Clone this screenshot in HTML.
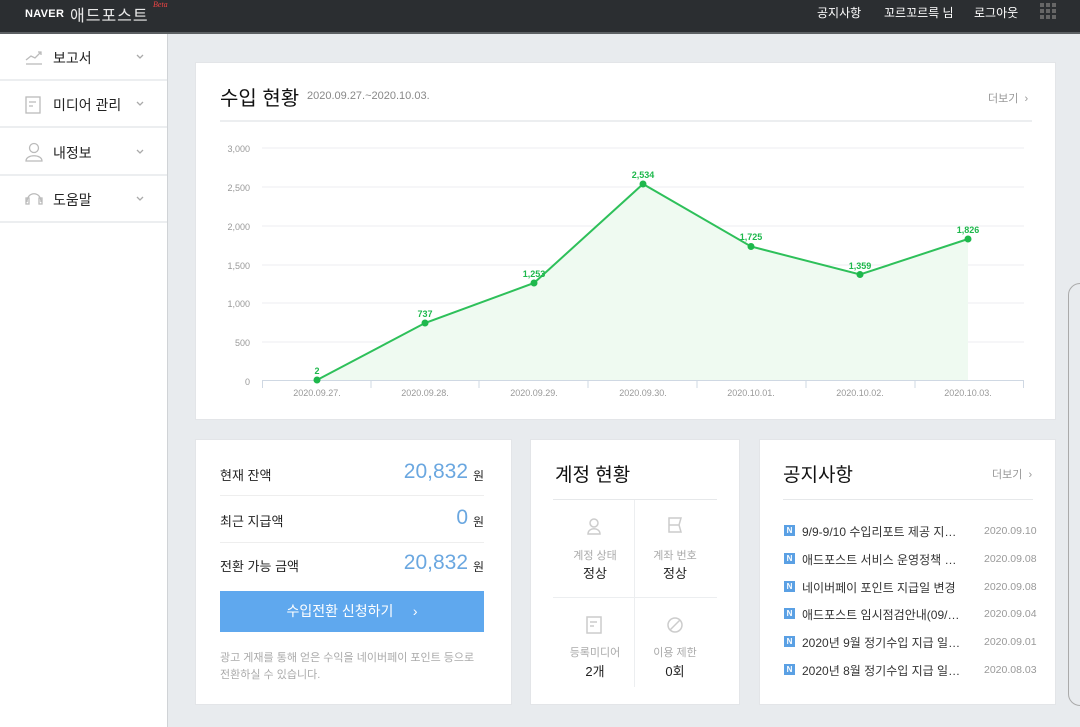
<!DOCTYPE html>
<html><head><meta charset="utf-8"><style>
*{margin:0;padding:0;box-sizing:border-box}
body{width:1080px;height:727px;overflow:hidden;background:#e8ebee;font-family:"Liberation Sans","Noto Sans CJK KR",sans-serif;position:relative;color:#222}
.a{position:absolute}
.hdr{left:0;top:0;width:1080px;height:34px;background:#2b2e31;border-bottom:2px solid #5c6063}
.side{left:0;top:34px;width:168px;height:693px;background:#fff;border-right:1px solid #d0d3d6}
.mi{position:absolute;left:0;width:167px;height:47px;border-bottom:2px solid #eceef0;font-size:14px;color:#222}
.mi span{position:absolute;left:53px;top:14px}
.mi svg{position:absolute;left:136px;top:20px}
.card{background:#fff;border:1px solid #e3e5e8}
.hd{color:#fff;font-size:12px;top:4px}
.gt{font-size:20px;color:#111}
.more{font-size:11px;color:#999}
.lbl{font-size:13px;color:#222}
.num{font-size:21px;color:#6aa7e0;text-align:right}
.won{font-size:12px;color:#222}
.nl{font-size:12px;color:#333}
.nd{font-size:10.5px;color:#999}
.nb{width:11px;height:11px;background:#5aa0e4;color:#fff;font-size:8px;font-weight:bold;text-align:center;line-height:11px}
</style></head><body>
<div class="a hdr"></div>
<div class="a" style="left:25px;top:8px;color:#fff;font-weight:900;font-size:11px;letter-spacing:0.3px">NAVER</div>
<div class="a" style="left:70px;top:2px;color:#e8e8e8;font-size:16px;letter-spacing:1px">애드포스트</div>
<div class="a" style="left:153px;top:0px;color:#e44;font-size:8px;font-style:italic;font-family:'Liberation Serif',serif">Beta</div>
<div class="a hd" style="left:817px">공지사항</div>
<div class="a hd" style="left:884px">꼬르꼬르륵 님</div>
<div class="a hd" style="left:974px">로그아웃</div>
<svg class="a" style="left:1040px;top:3px" width="17" height="17"><g fill="#666"><rect x="0" y="0" width="4" height="4"/><rect x="6" y="0" width="4" height="4"/><rect x="12" y="0" width="4" height="4"/><rect x="0" y="6" width="4" height="4"/><rect x="6" y="6" width="4" height="4"/><rect x="12" y="6" width="4" height="4"/><rect x="0" y="12" width="4" height="4"/><rect x="6" y="12" width="4" height="4"/><rect x="12" y="12" width="4" height="4"/></g></svg>

<div class="a side">
<div class="mi" style="top:0"><span>보고서</span><svg width="8" height="6"><path d="M1 1 L4 4 L7 1" fill="none" stroke="#aaa" stroke-width="1.3"/></svg></div>
<div class="mi" style="top:47px"><span>미디어 관리</span><svg width="8" height="6"><path d="M1 1 L4 4 L7 1" fill="none" stroke="#aaa" stroke-width="1.3"/></svg></div>
<div class="mi" style="top:95px"><span>내정보</span><svg width="8" height="6"><path d="M1 1 L4 4 L7 1" fill="none" stroke="#aaa" stroke-width="1.3"/></svg></div>
<div class="mi" style="top:142px"><span>도움말</span><svg width="8" height="6"><path d="M1 1 L4 4 L7 1" fill="none" stroke="#aaa" stroke-width="1.3"/></svg></div>
</div>
<svg class="a" style="left:24px;top:48px" width="20" height="170" fill="none" stroke="#bbb" stroke-width="1.3">
<path d="M2 12 L7 8 L11 10 L17 4 M14 4 L17 4 L17 7"/><path d="M2 16 H18"/>
<rect x="2" y="49" width="14" height="16"/><path d="M5 54 H12 M5 58 H9"/>
<circle cx="10" cy="100" r="4.5"/><path d="M2 113 C2 106 18 106 18 113 Z"/>
<path d="M3 154 C3 143 17 143 17 154"/><rect x="2" y="150" width="3" height="6"/><rect x="15" y="150" width="3" height="6"/>
</svg>

<div class="a" style="left:1068px;top:283px;width:20px;height:423px;border:1px solid #aaa;border-radius:12px 0 0 12px;background:#e8ebee"></div>

<div class="a card" style="left:195px;top:62px;width:861px;height:358px"></div>
<div class="a gt" style="left:220px;top:82px">수입 현황</div>
<div class="a" style="left:307px;top:90px;font-size:11px;color:#888">2020.09.27.~2020.10.03.</div>
<div class="a more" style="left:988px;top:90px">더보기 &nbsp;›</div>
<div class="a" style="left:220px;top:120px;width:812px;height:2px;background:#eceef0"></div>
<svg class="a" style="left:0;top:0" width="1080" height="727" font-family="Liberation Sans,sans-serif">
<g stroke="#f0f1f3" stroke-width="1.2">
<line x1="262" y1="148" x2="1024" y2="148"/><line x1="262" y1="187" x2="1024" y2="187"/><line x1="262" y1="226" x2="1024" y2="226"/><line x1="262" y1="265" x2="1024" y2="265"/><line x1="262" y1="303" x2="1024" y2="303"/><line x1="262" y1="342" x2="1024" y2="342"/>
</g>
<g font-size="9" fill="#999" text-anchor="end">
<text x="250" y="152">3,000</text><text x="250" y="191">2,500</text><text x="250" y="230">2,000</text><text x="250" y="269">1,500</text><text x="250" y="307">1,000</text><text x="250" y="346">500</text><text x="250" y="385">0</text>
</g>
<line x1="262" y1="380.5" x2="1024" y2="380.5" stroke="#cfd8e3"/>
<g stroke="#cfd8e3"><line x1="262.5" y1="380" x2="262.5" y2="388"/><line x1="371" y1="380" x2="371" y2="388"/><line x1="479" y1="380" x2="479" y2="388"/><line x1="588" y1="380" x2="588" y2="388"/><line x1="697" y1="380" x2="697" y2="388"/><line x1="806" y1="380" x2="806" y2="388"/><line x1="915" y1="380" x2="915" y2="388"/><line x1="1023.5" y1="380" x2="1023.5" y2="388"/></g>
<g font-size="9" fill="#999" text-anchor="middle">
<text x="317" y="396">2020.09.27.</text><text x="425" y="396">2020.09.28.</text><text x="534" y="396">2020.09.29.</text><text x="643" y="396">2020.09.30.</text><text x="751" y="396">2020.10.01.</text><text x="860" y="396">2020.10.02.</text><text x="968" y="396">2020.10.03.</text>
</g>
<path d="M317 380 L425 323 L534 283 L643 184 L751 246.5 L860 274.5 L968 239 L968 380 Z" fill="#effaf1"/>
<path d="M317 380 L425 323 L534 283 L643 184 L751 246.5 L860 274.5 L968 239" fill="none" stroke="#2ec05a" stroke-width="2"/>
<g fill="#1eb84c"><circle cx="317" cy="380" r="3.5"/><circle cx="425" cy="323" r="3.5"/><circle cx="534" cy="283" r="3.5"/><circle cx="643" cy="184" r="3.5"/><circle cx="751" cy="246.5" r="3.5"/><circle cx="860" cy="274.5" r="3.5"/><circle cx="968" cy="239" r="3.5"/></g>
<g font-size="9" font-weight="bold" fill="#1eb84c" text-anchor="middle">
<text x="317" y="374">2</text><text x="425" y="317">737</text><text x="534" y="277">1,253</text><text x="643" y="178">2,534</text><text x="751" y="240">1,725</text><text x="860" y="269">1,359</text><text x="968" y="233">1,826</text>
</g>
</svg>

<div class="a card" style="left:195px;top:439px;width:317px;height:266px"></div>
<div class="a lbl" style="left:220px;top:465px">현재 잔액</div>
<div class="a num" style="left:380px;top:460px;width:88px">20,832</div><div class="a won" style="left:473px;top:467px">원</div>
<div class="a" style="left:220px;top:495px;width:264px;height:1px;background:#eee"></div>
<div class="a lbl" style="left:220px;top:511px">최근 지급액</div>
<div class="a num" style="left:380px;top:506px;width:88px">0</div><div class="a won" style="left:473px;top:513px">원</div>
<div class="a" style="left:220px;top:542px;width:264px;height:1px;background:#eee"></div>
<div class="a lbl" style="left:220px;top:556px">전환 가능 금액</div>
<div class="a num" style="left:380px;top:551px;width:88px">20,832</div><div class="a won" style="left:473px;top:558px">원</div>
<div class="a" style="left:220px;top:591px;width:264px;height:41px;background:#5fa8ee;color:#fff;font-size:14px;text-align:center;line-height:40px">수입전환 신청하기 &nbsp;&nbsp;&nbsp; ›</div>
<div class="a" style="left:220px;top:650px;font-size:11px;color:#aaa;line-height:17px">광고 게재를 통해 얻은 수익을 네이버페이 포인트 등으로<br>전환하실 수 있습니다.</div>

<div class="a card" style="left:530px;top:439px;width:210px;height:266px"></div>
<div class="a gt" style="left:555px;top:460px;font-size:19px">계정 현황</div>
<div class="a" style="left:553px;top:499px;width:164px;height:1px;background:#e6e8ea"></div>
<div class="a" style="left:553px;top:597px;width:164px;height:1px;background:#eceef0"></div>
<div class="a" style="left:634px;top:500px;width:1px;height:187px;background:#eceef0"></div>
<svg class="a" style="left:583px;top:515px" width="110" height="120" fill="none" stroke="#ccc" stroke-width="1.5">
<circle cx="11" cy="8" r="4"/><path d="M5 19 C5 12 17 12 17 19 Z"/>
<path d="M86 3 H98 L96 10 L98 17 H86 Z M86 10 H96"/>
<rect x="4" y="102" width="14" height="16"/><path d="M7 107 H14 M7 111 H11"/>
<circle cx="92" cy="110" r="7"/><path d="M87 115 L97 105"/>
</svg>
<div class="a" style="left:555px;top:547px;width:80px;text-align:center;font-size:11px;color:#aaa">계정 상태</div>
<div class="a" style="left:555px;top:563px;width:80px;text-align:center;font-size:13px;color:#222">정상</div>
<div class="a" style="left:635px;top:547px;width:80px;text-align:center;font-size:11px;color:#aaa">계좌 번호</div>
<div class="a" style="left:635px;top:563px;width:80px;text-align:center;font-size:13px;color:#222">정상</div>
<div class="a" style="left:555px;top:644px;width:80px;text-align:center;font-size:11px;color:#aaa">등록미디어</div>
<div class="a" style="left:555px;top:661px;width:80px;text-align:center;font-size:13px;color:#222">2개</div>
<div class="a" style="left:635px;top:644px;width:80px;text-align:center;font-size:11px;color:#aaa">이용 제한</div>
<div class="a" style="left:635px;top:661px;width:80px;text-align:center;font-size:13px;color:#222">0회</div>

<div class="a card" style="left:759px;top:439px;width:297px;height:266px"></div>
<div class="a gt" style="left:783px;top:460px;font-size:19px">공지사항</div>
<div class="a more" style="left:992px;top:466px">더보기 &nbsp;›</div>
<div class="a" style="left:783px;top:499px;width:250px;height:1px;background:#e6e8ea"></div>
<div class="a nb" style="left:784px;top:525px">N</div><div class="a nl" style="left:802px;top:523px">9/9-9/10 수입리포트 제공 지…</div><div class="a nd" style="left:984px;top:525px">2020.09.10</div>
<div class="a nb" style="left:784px;top:553px">N</div><div class="a nl" style="left:802px;top:551px">애드포스트 서비스 운영정책 …</div><div class="a nd" style="left:984px;top:553px">2020.09.08</div>
<div class="a nb" style="left:784px;top:581px">N</div><div class="a nl" style="left:802px;top:579px">네이버페이 포인트 지급일 변경</div><div class="a nd" style="left:984px;top:581px">2020.09.08</div>
<div class="a nb" style="left:784px;top:608px">N</div><div class="a nl" style="left:802px;top:606px">애드포스트 임시점검안내(09/…</div><div class="a nd" style="left:984px;top:608px">2020.09.04</div>
<div class="a nb" style="left:784px;top:636px">N</div><div class="a nl" style="left:802px;top:634px">2020년 9월 정기수입 지급 일…</div><div class="a nd" style="left:984px;top:636px">2020.09.01</div>
<div class="a nb" style="left:784px;top:664px">N</div><div class="a nl" style="left:802px;top:662px">2020년 8월 정기수입 지급 일…</div><div class="a nd" style="left:984px;top:664px">2020.08.03</div>
</body></html>
